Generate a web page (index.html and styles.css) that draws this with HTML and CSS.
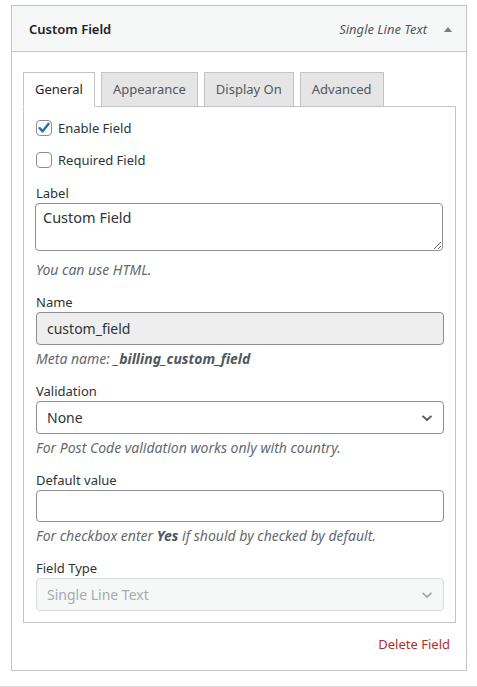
FILE: index.html
```html
<!DOCTYPE html>
<html lang="en">
<head>
<meta charset="utf-8">
<title>Custom Field</title>
<link rel="stylesheet" href="styles.css">
</head>
<body>
<div class="box">
  <div class="box-head">
    <span class="box-title">Custom Field</span>
    <span class="box-type">Single Line Text</span>
    <svg class="toggle" width="10" height="6" viewBox="0 0 10 6"><path d="M1 6 L5 1 L9 6 Z" fill="#787c82"/></svg>
  </div>
  <div class="box-body">
    <div class="tabs">
      <div class="tab active">General</div>
      <div class="tab">Appearance</div>
      <div class="tab">Display On</div>
      <div class="tab">Advanced</div>
    </div>
    <div class="panel">
      <label class="check-row">
        <span class="cbox"><svg width="16" height="16" viewBox="0 0 16 16"><path d="M3.6 8.2 L6.6 11.3 L12.6 3.8" fill="none" stroke="#2271b1" stroke-width="2.4" stroke-linecap="round" stroke-linejoin="round"/></svg></span>
        <span>Enable Field</span>
      </label>
      <label class="check-row">
        <span class="cbox"></span>
        <span>Required Field</span>
      </label>

      <div class="field first">
        <div class="lbl">Label</div>
        <textarea class="ctl area">Custom Field</textarea>
        <div class="help after-area">You can use HTML.</div>
      </div>

      <div class="field">
        <div class="lbl">Name</div>
        <div class="ctl input readonly">custom_field</div>
        <div class="help">Meta name: <strong>_billing_custom_field</strong></div>
      </div>

      <div class="field">
        <div class="lbl">Validation</div>
        <div class="ctl input select">
          <span>None</span>
          <svg width="12" height="8" viewBox="0 0 12 8"><path d="M1.5 1.8 L6 6 L10.5 1.8" fill="none" stroke="#50575e" stroke-width="1.8"/></svg>
        </div>
        <div class="help">For Post Code validation works only with country.</div>
      </div>

      <div class="field">
        <div class="lbl">Default value</div>
        <div class="ctl input short"></div>
        <div class="help">For checkbox enter <strong>Yes</strong> if should by checked by default.</div>
      </div>

      <div class="field">
        <div class="lbl">Field Type</div>
        <div class="ctl input select disabled">
          <span>Single Line Text</span>
          <svg width="12" height="8" viewBox="0 0 12 8"><path d="M1.5 1.8 L6 6 L10.5 1.8" fill="none" stroke="#a7aaad" stroke-width="1.8"/></svg>
        </div>
      </div>
    </div>
    <div class="actions"><a class="delete" href="#">Delete Field</a></div>
  </div>
</div>
<div class="next-line"></div>
</body>
</html>
```

FILE: styles.css
```css
* { box-sizing: border-box; }
html, body { margin: 0; padding: 0; background: #fff; }
body {
  font-family: "Noto Sans", "Open Sans", sans-serif;
  font-size: 13px;
  color: #2c3338;
  padding-top: 5px;
}
.box {
  width: 456px;
  margin-left: 11px;
  border: 1px solid #c3c4c7;
  background: #fff;
}
.box-head {
  height: 46px;
  background: #f6f7f7;
  border-bottom: 1px solid #c3c4c7;
  display: flex;
  align-items: center;
  padding: 0 13px 0 17px;
}
.box-title {
  font-weight: 600;
  font-size: 13px;
  color: #1d2327;
  flex: 1;
}
.box-type {
  font-style: italic;
  font-size: 13px;
  color: #50575e;
  margin-right: 16px;
}
.toggle { display: block; }
.box-body {
  padding: 20px 10px 16px 11px;
}
.tabs {
  display: flex;
  gap: 6px;
  margin-bottom: -1px;
  position: relative;
}
.tab {
  height: 35px;
  line-height: 33px;
  padding: 0 11px;
  border: 1px solid #c3c4c7;
  background: #e5e5e5;
  color: #50575e;
  font-size: 13px;
}
.tab.active {
  background: #fff;
  border-bottom-color: #fff;
  color: #1d2327;
}
.panel {
  border: 1px solid #c3c4c7;
  padding: 11px 11px 11px 12px;
}
.check-row {
  display: flex;
  align-items: center;
  gap: 6px;
  height: 20px;
  margin-bottom: 12px;
  color: #2c3338;
}
.cbox {
  width: 16px;
  height: 16px;
  border: 1px solid #8c8f94;
  border-radius: 4px;
  background: #fff;
  display: flex;
  align-items: center;
  justify-content: center;
  flex: none;
}
.cbox svg { display: block; margin: -1px; }
.field { margin-top: 12px; }
.field.first { margin-top: 13px; }
.lbl {
  line-height: 20px;
  color: #2c3338;
}
.ctl {
  display: block;
  width: 100%;
  border: 1px solid #8c8f94;
  border-radius: 4px;
  background: #fff;
  font-family: inherit;
  font-size: 14px;
  color: #2c3338;
}
.area {
  height: 48px;
  padding: 3px 7px;
  line-height: 20px;
  font-size: 14.5px;
  resize: vertical;
  margin-left: -1px;
}
.input {
  height: 33px;
  line-height: 31px;
  padding: 0 10px;
}
.input.short { height: 32px; }
.readonly {
  background: #eeeeee;
}
.select {
  display: flex;
  align-items: center;
  justify-content: space-between;
  padding: 0 10px 0 10px;
  color: #2c3338;
}
.select svg { display: block; }
.select.disabled {
  background: #f6f7f7;
  border-color: #dcdcde;
  color: #a7aaad;
}
.help {
  margin-top: 4px;
  line-height: 20px;
  font-size: 14px;
  font-style: italic;
  color: #646970;
}
.help.after-area { margin-top: 9px; }
.help strong { font-weight: 700; color: #50575e; }
.actions {
  text-align: right;
  padding: 11px 6px 0 0;
  line-height: 20px;
}
.delete {
  color: #b32d2e;
  text-decoration: none;
  font-size: 13px;
}
.next-line {
  margin-top: 15px;
  border-top: 1px solid #dcdcde;
}
```
